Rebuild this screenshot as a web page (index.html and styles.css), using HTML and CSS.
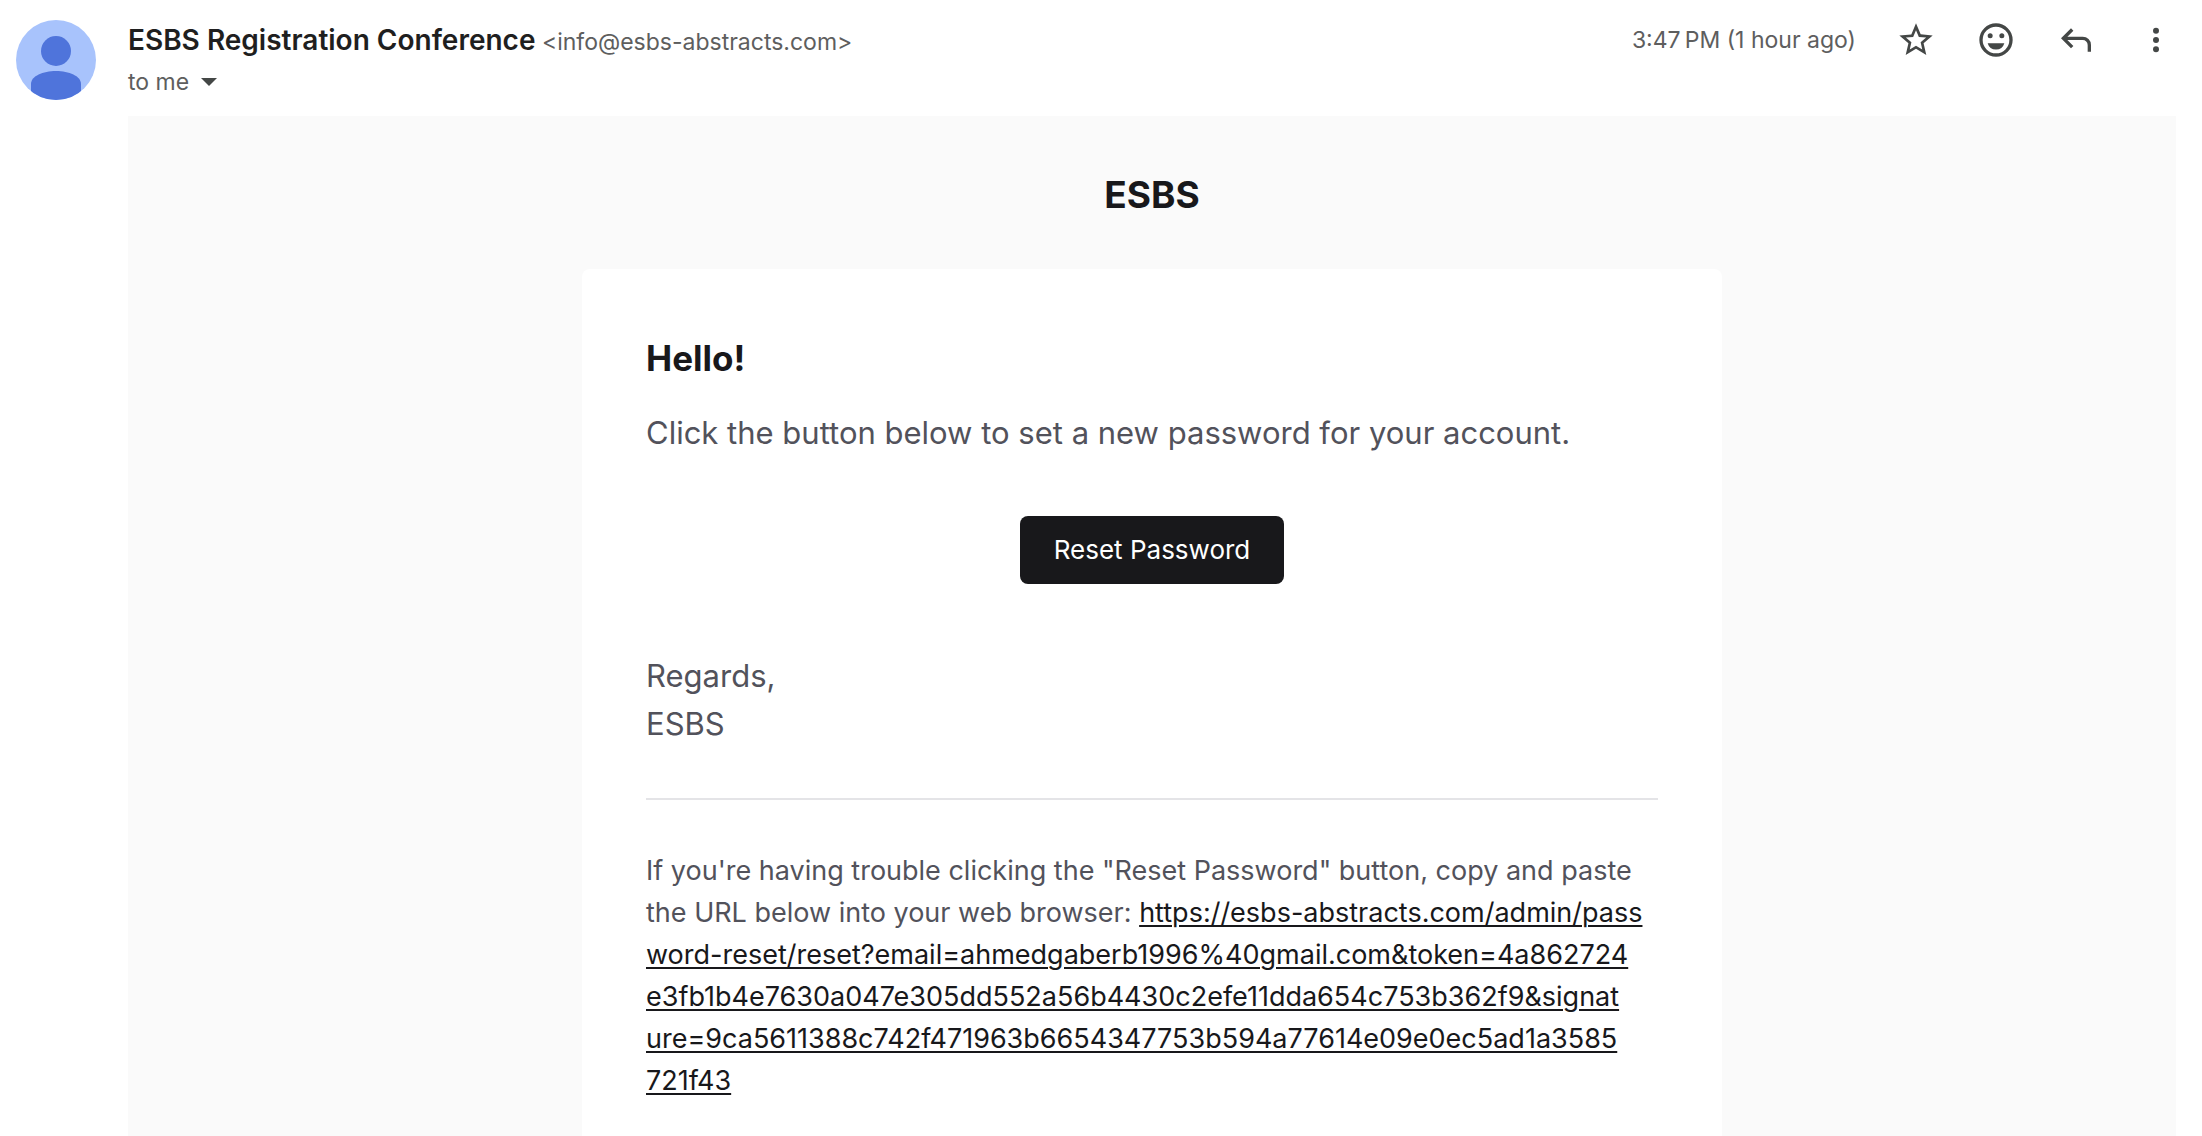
FILE: index.html
```html
<!DOCTYPE html>
<html lang="en">
<head>
<meta charset="utf-8">
<meta name="viewport" content="width=device-width, initial-scale=1">
<title>Reset Password</title>
<link rel="stylesheet" href="styles.css">
</head>
<body>
<article class="message">
  <svg class="avatar" viewBox="0 0 80 80" aria-hidden="true">
    <defs><clipPath id="disc"><circle cx="40" cy="40" r="40"/></clipPath></defs>
    <g clip-path="url(#disc)">
      <rect width="80" height="80" fill="#a8c3fc"/>
      <circle cx="40" cy="31" r="15" fill="#4f74db"/>
      <path d="M15 80V64C15 56 27 51 40 51S65 56 65 64V80Z" fill="#4f74db"/>
    </g>
  </svg>
  <div class="content">
    <header class="head">
      <div class="sender">
        <div class="from"><span class="name">ESBS Registration Conference</span> <span class="address">&lt;info@esbs-abstracts.com&gt;</span></div>
        <button class="recipients" type="button">to me
          <svg class="caret" viewBox="0 0 16 8" aria-hidden="true"><path d="M0 0H16L8 8Z"/></svg>
        </button>
      </div>
      <div class="actions">
        <time class="date">3:47&#8239;PM (1 hour ago)</time>
        <button class="icon" type="button" aria-label="Star"><svg viewBox="0 0 24 24"><path d="M22 9.24l-7.19-.62L12 2 9.19 8.63 2 9.24l5.46 4.73L5.82 21 12 17.27 18.18 21l-1.63-7.03L22 9.24zM12 15.4l-3.76 2.27 1-4.28-3.32-2.88 4.38-.38L12 6.1l1.71 4.04 4.38.38-3.32 2.88 1 4.28L12 15.4z"/></svg></button>
        <button class="icon" type="button" aria-label="Add reaction"><svg viewBox="0 0 24 24"><path d="M12 2a10 10 0 1 0 0 20 10 10 0 0 0 0-20zm0 18a8 8 0 1 1 0-16 8 8 0 0 1 0 16z"/><circle cx="8.5" cy="9.5" r="1.5"/><circle cx="15.5" cy="9.5" r="1.5"/><path d="M7 14h10a5.2 5.2 0 0 1-10 0z"/></svg></button>
        <button class="icon" type="button" aria-label="Reply"><svg viewBox="0 0 24 24"><path d="M19 19v-4q0-1.250-.875-2.125T16 12H6.825l3.600 3.600L9 17l-6-6 6-6 1.425 1.400-3.600 3.600H16q2.075 0 3.538 1.463T21 15v4z"/></svg></button>
        <button class="icon" type="button" aria-label="More"><svg viewBox="0 0 24 24"><circle cx="12" cy="6.500" r="1.800"/><circle cx="12" cy="12" r="1.800"/><circle cx="12" cy="17.500" r="1.800"/></svg></button>
      </div>
    </header>
    <div class="mail">
      <div class="brand">ESBS</div>
      <main class="card">
        <h1 class="greeting">Hello!</h1>
        <p class="text">Click the button below to set a new password for your account.</p>
        <a class="reset" href="#reset">Reset Password</a>
        <p class="text">Regards,<br>ESBS</p>
        <p class="fallback">If you're having trouble clicking the "Reset Password" button, copy and paste the URL below into your web browser: <a href="#reset">https://esbs-abstracts.com/admin/pass<br>word-reset/reset?email=ahmedgaberb1996%40gmail.com&amp;token=4a862724<br>e3fb1b4e7630a047e305dd552a56b4430c2efe11dda654c753b362f9&amp;signat<br>ure=9ca5611388c742f471963b6654347753b594a77614e09e0ec5ad1a3585<br>721f43</a></p>
      </main>
    </div>
  </div>
</article>
</body>
</html>
```
FILE: styles.css
```css
* {
  box-sizing: border-box;
}

body {
  margin: 0;
  background: #fff;
  font-family: Inter, "Liberation Sans", sans-serif;
  color: #5e5e5e;
}

button {
  margin: 0;
  padding: 0;
  border: 0;
  background: none;
  font: inherit;
  color: inherit;
}

.message {
  display: flex;
  gap: 32px;
  min-height: 100vh;
  padding: 20px 26px 0 16px;
}

.avatar {
  flex: none;
  width: 80px;
  height: 80px;
}

.content {
  flex: 1;
  min-width: 0;
  display: flex;
  flex-direction: column;
}

.head {
  display: flex;
  justify-content: space-between;
  height: 96px;
  font-size: 23px;
  line-height: 40px;
}

.name {
  font-size: 28px;
  font-weight: 600;
  color: #1f1f1f;
}

.recipients {
  display: flex;
  align-items: center;
  gap: 12px;
}

.caret {
  width: 16px;
  height: 8px;
  fill: #444746;
}

.actions {
  display: flex;
  gap: 40px;
  align-items: flex-start;
}

.icon,
.icon svg {
  display: block;
  width: 40px;
  height: 40px;
  fill: #444746;
}

.mail {
  flex: 1;
  display: flex;
  flex-direction: column;
  align-items: center;
  background: #fafafa;
}

.brand {
  padding: 50px 0 46px;
  font-size: 37px;
  line-height: 57px;
  font-weight: 700;
  color: #18181b;
}

.card {
  flex: 1;
  display: flex;
  flex-direction: column;
  width: 100%;
  max-width: 1140px;
  padding: 64px;
  border-radius: 8px 8px 0 0;
  background: #fff;
  color: #52525b;
}

.greeting {
  margin: 0 0 26px;
  font-size: 35px;
  line-height: 50px;
  font-weight: 700;
  color: #18181b;
}

.text {
  margin: 0;
  font-size: 31px;
  line-height: 48px;
}

.reset {
  align-self: center;
  margin: 59px 0 68px;
  padding: 16px 34px;
  border-radius: 8px;
  background: #18181b;
  color: #fff;
  font-size: 26px;
  line-height: 36px;
  text-decoration: none;
}

.fallback {
  margin: 50px 0 0;
  padding-top: 50px;
  border-top: 2px solid #e4e4e7;
  font-size: 27px;
  line-height: 42px;
}

.fallback a {
  color: #18181b;
  overflow-wrap: anywhere;
  text-underline-offset: 3px;
  text-decoration-thickness: 2px;
}
```
